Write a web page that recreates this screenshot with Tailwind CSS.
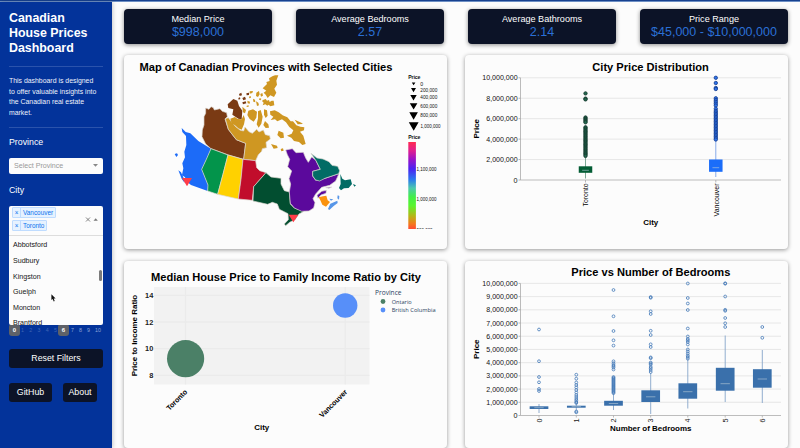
<!DOCTYPE html>
<html lang="en">
<head>
<meta charset="utf-8">
<title>Canadian House Prices Dashboard</title>
<script src="https://cdn.jsdelivr.net/npm/@tailwindcss/browser@4"></script>
</head>
<body class="flex h-[448px] w-[800px] flex-col overflow-hidden bg-[#fcfcfc] font-['Liberation_Sans',Arial,sans-serif] text-black">
<div class="h-[2px] w-full shrink-0 border-b border-[#6d8fc4] bg-[#17418f]"></div>
<div class="flex min-h-0 flex-1">
  <aside class="flex w-[112px] shrink-0 flex-col bg-[#03339a] pl-[9px] pr-[9px] text-white shadow-[1px_0_4px_rgba(0,0,0,0.2)]">
    <h1 class="mt-[9px] whitespace-nowrap text-[12.4px] font-bold leading-[15px]">Canadian<br>House Prices<br>Dashboard</h1>
    <hr class="mt-[10px] border-[#2a53ac]">
    <p class="mt-[9px] whitespace-nowrap text-[6.9px] leading-[10.7px] text-[#eef2fb]">This dashboard is designed<br>to offer valuable insights into<br>the Canadian real estate<br>market.</p>
    <hr class="mt-[8px] border-[#2a53ac]">
    <h2 class="mt-[9px] text-[8.8px] leading-[11px]">Province</h2>
    <div class="mt-[10px] flex h-[16px] items-center justify-between rounded-[2px] bg-[#fcfcfc] px-[5px] text-[7.1px] text-[#999]">
      <span class="pt-[1px]">Select Province</span>
      <svg class="h-[3px] w-[5px]" viewBox="0 0 5 3"><path d="M0 0H5L2.5 2.7Z" fill="#888"/></svg>
    </div>
    <h2 class="mt-[11px] text-[8.8px] leading-[11px]">City</h2>
    <div class="relative mt-[10px] flex h-[30px] items-center justify-between rounded-t-[2px] border-b border-[#ddd] bg-[#fcfcfc] pl-[3px] pr-[5px]">
      <div class="mt-[-3px] flex flex-col items-start gap-[2.5px] text-[6.4px] leading-[10px] text-[#0a72ee]">
        <div class="flex h-[11px] rounded-[1px] border border-[#bfdcff] bg-[#e6f2ff]"><span class="w-[8px] border-r border-[#bfdcff] text-center">×</span><span class="w-[34px] pl-[2px]">Vancouver</span></div>
        <div class="flex h-[11px] rounded-[1px] border border-[#bfdcff] bg-[#e6f2ff]"><span class="w-[8px] border-r border-[#bfdcff] text-center">×</span><span class="w-[25px] pl-[2px]">Toronto</span></div>
      </div>
      <svg class="mt-[-2px] h-[5px] w-[13px]" viewBox="0 0 13 5"><path d="M1 .5L5 4.5M5 .5L1 4.5" stroke="#777" stroke-width=".9"/><path d="M8.5 3.8H12.8L10.7 1.2Z" fill="#777"/></svg>
      <div class="absolute left-0 top-[30px] z-10 h-[89px] w-[94px] overflow-hidden rounded-b-[2px] bg-[#fcfcfc] pl-[4px] pt-[2.5px] text-[7.1px] leading-[15.6px] text-[#161616]">
        <div>Abbotsford</div><div>Sudbury</div><div>Kingston</div><div>Guelph</div><div>Moncton</div><div>Brantford</div>
        <div class="absolute right-[1px] top-[34px] h-[11px] w-[3.5px] rounded-full bg-[#7b7b7b]"></div>
        <svg class="absolute left-[41.5px] top-[58px] h-[8px] w-[5px]" viewBox="0 0 5 8"><path d="M.4.3V6L1.7 4.9L2.7 7.4L3.7 7L2.7 4.6H4.6Z" fill="#111"/></svg>
      </div>
    </div>
    <div class="mt-[89px] flex h-[10px] items-center justify-between text-[5.3px] leading-[6px] text-[#8ba3d6]">
      <span class="mt-[1px] flex h-[12px] w-[11px] shrink-0 items-center justify-center rounded-[3px] bg-[#5f6268] text-[6px] font-bold text-white">0</span>
      <div class="flex flex-1 justify-between pl-[1px] pr-[1px] text-[#3f65b4]"><span>1</span><span>2</span><span>3</span><span>4</span><span>5</span></div>
      <span class="mt-[1px] flex h-[12px] w-[11px] shrink-0 items-center justify-center rounded-[3px] bg-[#5f6268] text-[6px] font-bold text-white">6</span>
      <div class="flex w-[34px] shrink-0 justify-between pl-[2px] pr-[2px]"><span>7</span><span>8</span><span>9</span><span>10</span></div>
    </div>
    <div class="mt-[14px] flex h-[19px] shrink-0 items-center justify-center rounded-[3px] bg-[#0c1327] text-[8.8px]">Reset Filters</div>
    <div class="mt-[15px] flex gap-[11px] text-[8.8px]">
      <div class="flex h-[19px] w-[43px] items-center justify-center rounded-[3px] bg-[#0c1327]">GitHub</div>
      <div class="flex h-[19px] w-[34px] items-center justify-center rounded-[3px] bg-[#0c1327]">About</div>
    </div>
  </aside>
  <main class="flex min-w-0 flex-1 flex-col pl-[12px] pr-[12px] pt-[6.5px]">
    <div class="flex shrink-0 gap-[24px] text-center text-white">
      <div class="h-[35px] w-[148px] rounded-[4px] bg-[#0c1327] pt-[4px] shadow-[0_1px_4px_rgba(0,0,0,0.45)]"><div class="text-[9.1px] leading-[12px]">Median Price</div><div class="text-[12.5px] leading-[14px] text-[#2b70d6]">$998,000</div></div>
      <div class="h-[35px] w-[148px] rounded-[4px] bg-[#0c1327] pt-[4px] shadow-[0_1px_4px_rgba(0,0,0,0.45)]"><div class="text-[9.1px] leading-[12px]">Average Bedrooms</div><div class="text-[12.5px] leading-[14px] text-[#2b70d6]">2.57</div></div>
      <div class="h-[35px] w-[148px] rounded-[4px] bg-[#0c1327] pt-[4px] shadow-[0_1px_4px_rgba(0,0,0,0.45)]"><div class="text-[9.1px] leading-[12px]">Average Bathrooms</div><div class="text-[12.5px] leading-[14px] text-[#2b70d6]">2.14</div></div>
      <div class="h-[35px] w-[148px] rounded-[4px] bg-[#0c1327] pt-[4px] shadow-[0_1px_4px_rgba(0,0,0,0.45)]"><div class="text-[9.1px] leading-[12px]">Price Range</div><div class="text-[12.5px] leading-[14px] text-[#2b70d6]">$45,000 - $10,000,000</div></div>
    </div>
    <div class="mt-[11.5px] grid grid-cols-[323px_323px] gap-x-[18px] gap-y-[12px]">
      <section class="h-[194px] rounded-[4px] bg-[#fcfcfc] shadow-[0_1px_4px_rgba(0,0,0,0.4)]">
        <svg class="h-[194px] w-[323px]" viewBox="124 55 323 194">
          <defs><linearGradient id="hue" x1="0" y1="0" x2="0" y2="1"><stop offset="0" stop-color="#ff2b50"/><stop offset=".1" stop-color="#e01f90"/><stop offset=".2" stop-color="#9a12c8"/><stop offset=".31" stop-color="#4a22f2"/><stop offset=".43" stop-color="#2a78ee"/><stop offset=".53" stop-color="#4cc9ae"/><stop offset=".63" stop-color="#43ee4a"/><stop offset=".73" stop-color="#59f52f"/><stop offset=".85" stop-color="#b5b616"/><stop offset=".94" stop-color="#f4791c"/><stop offset="1" stop-color="#ff4a35"/></linearGradient></defs>
          <text x="139.5" y="70.5" font-size="11.4" font-weight="bold" textLength="253" lengthAdjust="spacingAndGlyphs">Map of Canadian Provinces with Selected Cities</text>
          <g transform="translate(165 70) scale(.33333)" stroke="#ddd8d0" stroke-width="2" stroke-linejoin="round">
            <path fill="#1c6bf8" stroke="none" d="M50 174L62 186 76 190 100 213 138 236 124 268 110 298 129 345 128 363 78 345 66 335 60 322 51 315 55 295 52 280 60 262 58 245 64 225 63 198 52 186ZM29 252l7-2 3 5-5 6zM40 301l8 6 8 17 3 15-9-13z"/>
            <path fill="#7a3a14" d="M122 114L132 118 138 110 145 113 148 120 165 116 172 124 185 128 187 140 180 147 190 178 214 209 242 220 236 268 190 255 138 236 122 222 111 200 112 180 117 165 117 140 122 130Z"/>
            <path fill="#7a3a14" stroke="none" d="M188 103L205 87 217 92 222 108 232 122 230 148 220 146 202 134 205 118 190 114ZM222 72l7-4 2 8-7 2zM232 84l8-4 3 8-8 3zM232 97l10-3 2 6-10 3zM244 70l8-2v7l-7 1zM220 84l5-2 1 5-5 2z"/>
            <path fill="#cf9722" d="M181 146L190 143 200 156 212 170 226 181 236 183 240 171 252 185 262 190 275 178 282 186 295 180 301 194 314 197 316 207 303 217 305 233 292 236 290 244 280 254 272 272 236 268 242 220 214 209 190 178Z"/>
            <g fill="#cf9722" stroke="none">
              <path d="M340 16L334 32 336 44 328 56 334 68 327 81 316 76 308 84 302 74 296 68 304 62 293 55 300 48 306 42 304 36 314 33 312 25 322 19 330 16Z"/>
              <path d="M294 90l8-3 4 5 6-2 2 6 6-4 6 0 2 14-12 3-5-5-4 3-6-4-8 3 3-8-5-5zM274 68l8-5 2 10-5 8-6-3zM286 72l6-3 2 8-6 3zM254 64l10-1-2 6-8 2zM264 86l6 3 1 8-6-2zM273 94l7 4 2 8-6 2zM247 92l8 3-1 6-6-1zM252 80l5-2 1 5-5 2zM284 84l5 2-2 5-5-2zM245 107l6-1v4l-6 1z"/>
              <path d="M315 124l14-3 12 6 14 10 12 16 17 1 10 12 12 4 12 2-1 9-12 4 10 12 7 25-10 3-10-9-15-3-8-10-13-6 14-6 5-10-12-10-10-14-12-9-14 6-7-6-13 2 8-10-9-6zM349 134l18 8 10 12-7 2-13-12zM250 122l14-4 12 7-2 18-8 12-12-8-7-12zM279 124l8-4 6 20-4 21-8 12-6-10 4-18zM196 146l14-5 8 6 12 1 6-13 4 12-3 16-7 16-10-4-11-10-9-4zM232 110l11 10-3 10-6-3zM297 118l9 3 2 16-6 7-5-10zM300 153l10 10 2 10-10 1-7-9zM341 182l14 6 2 15-10 2-10-10zM318 222l18 5 2 7-12 2zM347 237l7-2 2 7-7 2zM389 149l20 9 5 4-16 1z"/>
            </g>
            <path fill="#03944b" d="M138 236L189 255 174 313 158 373 128 363 129 345 110 298 124 268Z"/>
            <path fill="#ffd100" d="M189 255L234 268 228 328 220 387 158 373 174 313Z"/>
            <path fill="#c10d2b" d="M234 268L272 272 275 293 284 302 303 308 266 350 262 391 220 387 228 328Z"/>
            <path fill="#024e30" d="M303 308L318 321 348 325 348 342 358 362 373 366 376 402 388 414 417 424 402 432 390 449 374 457 362 467 358 462 370 449 369 431 343 418 337 402 322 397 308 403 264 393 266 350Z"/>
            <path fill="#5b099c" d="M362 240L382 236 393 248 415 247 422 264 430 277 440 261 452 270 466 298 443 304 443 318 452 331 480 325 522 311 512 333 494 346 470 352 452 372 444 386 450 398 446 414 432 423 410 424 388 414 376 400 373 366 377 342 372 326 380 303 368 290 374 268 367 254ZM456 376l14-12 14-3-1 9-15 5-9 10zM482 353l18-2-8 4z"/>
            <path fill="#026c65" d="M438 250L456 264 474 267 492 275 501 286 518 289 524 302 521 311 480 325 464 333 452 330 443 318 443 304 466 298 453 272Z"/>
            <path fill="#026c65" stroke="none" d="M526 312l6 14 8 5 17-3 4 14-10 12-14 1-9 6-6-7 5-12zM564 342l9 4-5 4z"/>
            <path fill="#fa9310" stroke="none" d="M461 382L474 379 484 377 488 391 495 396 483 410 472 404 466 391Z"/>
            <path fill="#5796e8" stroke="none" d="M489 417l7-16 21-9 1 7-12 9-13 12zM493 386l12 2-7 4zM518 376l5 2-1 11-5-4z"/>
            <path fill="#ff3d48" stroke="none" d="M51 324H81L66 349ZM371 434H400L385 457Z"/>
          </g>
          <g font-size="5.2" fill="#111">
            <g font-weight="bold"><text x="408.3" y="79" textLength="12">Price</text><text x="408.3" y="139" textLength="12">Price</text></g>
            <path fill="#000" d="M411.8 82.4h3.6l-1.8 2.9zM411 88h5l-2.5 4.2zM410.3 95h6.4l-3.2 5.4zM409.8 103.2h7.6l-3.8 6.4zM409.3 112.3h8.6l-4.3 7.5zM408.8 122.3h9.8l-4.9 8.4z"/>
            <text x="420.3" y="85.6">0</text><text x="420.3" y="91.7" textLength="17" lengthAdjust="spacingAndGlyphs">200,000</text><text x="420.3" y="99" textLength="17" lengthAdjust="spacingAndGlyphs">400,000</text><text x="420.3" y="107.5" textLength="17" lengthAdjust="spacingAndGlyphs">600,000</text><text x="420.3" y="117.3" textLength="17" lengthAdjust="spacingAndGlyphs">800,000</text><text x="420.5" y="128" textLength="20" lengthAdjust="spacingAndGlyphs">1,000,000</text>
            <rect x="408.3" y="142" width="7.6" height="87" fill="url(#hue)"/>
            <text x="416.5" y="170.6" textLength="20" lengthAdjust="spacingAndGlyphs">1,100,000</text><text x="416.5" y="200.9" textLength="20" lengthAdjust="spacingAndGlyphs">1,000,000</text>
            <svg x="416" y="227.4" width="20" height="1.6"><text x=".6" y="4.1" textLength="16" lengthAdjust="spacingAndGlyphs">900,000</text></svg>
          </g>
        </svg>
      </section>
      <section class="h-[194px] rounded-[4px] bg-[#fcfcfc] shadow-[0_1px_4px_rgba(0,0,0,0.4)]">
        <svg class="h-[194px] w-[323px]" viewBox="465 55 323 194">
          <text x="592.3" y="70.5" font-size="11.4" font-weight="bold" textLength="116.5" lengthAdjust="spacingAndGlyphs">City Price Distribution</text>
          <g id="cityPlot"></g>
          <text transform="translate(479 138.5) rotate(-90)" font-size="8" font-weight="bold" textLength="19.5" lengthAdjust="spacingAndGlyphs">Price</text>
          <text transform="translate(588.3 206.5) rotate(-90)" font-size="7.2" textLength="23" lengthAdjust="spacingAndGlyphs">Toronto</text>
          <text transform="translate(718.5 216.5) rotate(-90)" font-size="7.2" textLength="33" lengthAdjust="spacingAndGlyphs">Vancouver</text>
          <text x="643.3" y="224.8" font-size="8" font-weight="bold" textLength="15" lengthAdjust="spacingAndGlyphs">City</text>
        </svg>
      </section>
      <section class="h-[187px] rounded-[4px] bg-[#fcfcfc] shadow-[0_1px_4px_rgba(0,0,0,0.4)]">
        <svg class="h-[187px] w-[323px]" viewBox="124 261 323 187">
          <text x="151" y="281" font-size="11.4" font-weight="bold" textLength="270" lengthAdjust="spacingAndGlyphs">Median House Price to Family Income Ratio by City</text>
          <rect x="154" y="287" width="215.5" height="97.5" fill="#f2f2f2"/>
          <path d="M154 295.3H369.5M154 322H369.5M154 348.7H369.5M154 375.3H369.5M185.5 287V384.5M345.2 287V384.5" stroke="#ebebeb" stroke-width="1.3"/>
          <circle cx="185.6" cy="358.7" r="18.6" fill="#4b8067"/><circle cx="345.2" cy="305.5" r="12.2" fill="#578ff9"/>
          <g font-size="7.4" font-weight="bold" text-anchor="end" fill="#222"><text x="153.3" y="298">14</text><text x="153.3" y="324.7">12</text><text x="153.3" y="351.4">10</text><text x="153.3" y="378">8</text></g>
          <text transform="translate(136.7 376.3) rotate(-90)" font-size="8" font-weight="bold" textLength="81.5" lengthAdjust="spacingAndGlyphs">Price to Income Ratio</text>
          <text transform="translate(187.8 392.5) rotate(-45)" font-size="7.4" font-weight="bold" text-anchor="end" textLength="26" lengthAdjust="spacingAndGlyphs">Toronto</text>
          <text transform="translate(347.8 392.5) rotate(-45)" font-size="7.4" font-weight="bold" text-anchor="end" textLength="36" lengthAdjust="spacingAndGlyphs">Vancouver</text>
          <text x="254.3" y="430" font-size="8" font-weight="bold" textLength="15" lengthAdjust="spacingAndGlyphs">City</text>
          <g font-family="Open Sans, sans-serif" fill="#2a3f5f"><text x="375" y="295" font-size="6.6" textLength="26.5" lengthAdjust="spacingAndGlyphs">Province</text><text x="391.7" y="303.8" font-size="6" textLength="20" lengthAdjust="spacingAndGlyphs">Ontario</text><text x="391.7" y="312.3" font-size="6" textLength="44" lengthAdjust="spacingAndGlyphs">British Columbia</text></g>
          <circle cx="383" cy="301.5" r="2.4" fill="#4b8067"/><circle cx="383" cy="310" r="2.4" fill="#578ff9"/>
        </svg>
      </section>
      <section class="h-[187px] rounded-[4px] bg-[#fcfcfc] shadow-[0_1px_4px_rgba(0,0,0,0.4)]">
        <svg class="h-[187px] w-[323px]" viewBox="465 261 323 187">
          <text x="571.3" y="276" font-size="11.4" font-weight="bold" textLength="159" lengthAdjust="spacingAndGlyphs">Price vs Number of Bedrooms</text>
          <g id="bedPlot"></g>
          <text transform="translate(479 359) rotate(-90)" font-size="8" font-weight="bold" textLength="19.5" lengthAdjust="spacingAndGlyphs">Price</text>
          <text x="610" y="430.6" font-size="8" font-weight="bold" textLength="81.5" lengthAdjust="spacingAndGlyphs">Number of Bedrooms</text>
        </svg>
      </section>
    </div>
  </main>
</div>
<script>
const axis = (top, bottom, step) => {
  let s = '';
  for (let m = 0; m <= 10; m += step) {
    const y = bottom - (bottom - top) * m / 10;
    const label = m ? m + ',000,000' : '0';
    s += `<path d="M520.5 ${y}H781" stroke="${m ? '#e4e4e4' : '#b5b5b5'}" stroke-width=".9"/><path d="M518.5 ${y}H520.5" stroke="#999" stroke-width=".7"/>`;
    s += `<text x="517.6" y="${y + 2.6}" font-size="7.2" text-anchor="end" fill="#111"${m ? ` textLength="${m === 10 ? 35.3 : 31.3}" lengthAdjust="spacingAndGlyphs"` : ''}>${label}</text>`;
  }
  return s + `<path d="M520.5 ${top}V${bottom}" stroke="#aaa" stroke-width=".8"/>`;
};
const dots = (x, ys, color, fill, r) => ys.map(y => `<circle cx="${x}" cy="${y}" r="${r}" stroke="${color}" stroke-width=".8" fill="${fill}"/>`).join('');
const run = (a, b, d) => { const out = []; for (let y = a; y <= b; y += d) out.push(y); return out; };
const box = (x, w, low, high, top, bottom, med, color, whisker) =>
  `<path d="M${x} ${low}V${high}" stroke="${whisker}" stroke-width=".9"/><rect x="${x - w / 2}" y="${top}" width="${w}" height="${bottom - top}" fill="${color}"/><path d="M${x - w / 4} ${med}H${x + w / 4}" stroke="#b9cbd8" stroke-width=".6"/>`;

document.getElementById('cityPlot').innerHTML = axis(77.8, 180, 2)
  + '<path d="M585.5 180v2.5M715.8 180v2.5" stroke="#aaa" stroke-width=".8"/>'
  + box(585.5, 13.5, 156, 178.5, 166.3, 172.8, 170.3, '#035c34', '#6f9e8a')
  + dots(585.5, [93.4, 98.6, 99.4, ...run(117.5, 122.5, 1.2), ...run(127.3, 156.4, 1.3)], '#12352a', '#24684f', 1.7)
  + box(715.8, 13.5, 140, 177, 159.5, 171.8, 167.7, '#1b6df9', '#7aa3e8')
  + dots(715.8, [77.8, 83, 88, 89, ...run(98.3, 106, 1.8), 108.8, ...run(111, 140.5, 1.5)], '#143b8c', '#2e72ea', 1.7);

const blue = '#4379b8';
const beds = [
  [539, 404, 413, 406.3, 409, 407.7, [329.5, 361.2, 377, 382.3, 389, 391]],
  [576.3, 403, 410, 405.7, 407.7, 406.7, [374.7, 378.7, 382.5, 385, 387.4, 390, 392.5, 395, 397, 399, 400.5, 402, 403, 411.5, 412.3]],
  [613.5, 393.5, 410, 400.8, 405.7, 403.5, [290, 316.3, 331, 340.3, 345.6, 361.3, 363.3, 365, 366.2, 367.5, 369.5, ...run(377, 393.2, .9)]],
  [650.7, 373, 414, 390.3, 402, 396.8, [297, 297.8, 311.3, 314, 330.8, 335, 344.3, 347, 357.4, 358.2, 362.5, 363.5, 364.7, 367, 368.3, 370, 372]],
  [687.8, 359, 408.5, 383.3, 398.7, 391.7, [283.5, 298, 303.5, 310, 328.5, 336.5, 339, 340.3, 342, 344.5, 349.5, 351.5, 353.5, 355.5, 357, 358.7]],
  [725.2, 335.5, 402, 367.8, 390.7, 383.7, [283.3, 283.7, 296.5, 309.8, 310.8, 318, 323.3, 327]],
  [762.3, 350, 403, 369.2, 387.7, 379, [327, 337.8]]
];
document.getElementById('bedPlot').innerHTML = axis(283.4, 415.5, 1)
  + beds.map(([x, low, high, top, bottom, med, out], i) =>
    `<path d="M${x} 415.5v2" stroke="#aaa" stroke-width=".8"/>`
    + box(x, 18.7, low, high, top, bottom, med, '#3a70ab', '#86a5cb')
    + dots(x, out, blue, 'none', 1.4)
    + `<text transform="translate(${x + 2.6} 422.6) rotate(-90)" font-size="7.2" fill="#222">${i}</text>`).join('');
</script>
</body>
</html>
